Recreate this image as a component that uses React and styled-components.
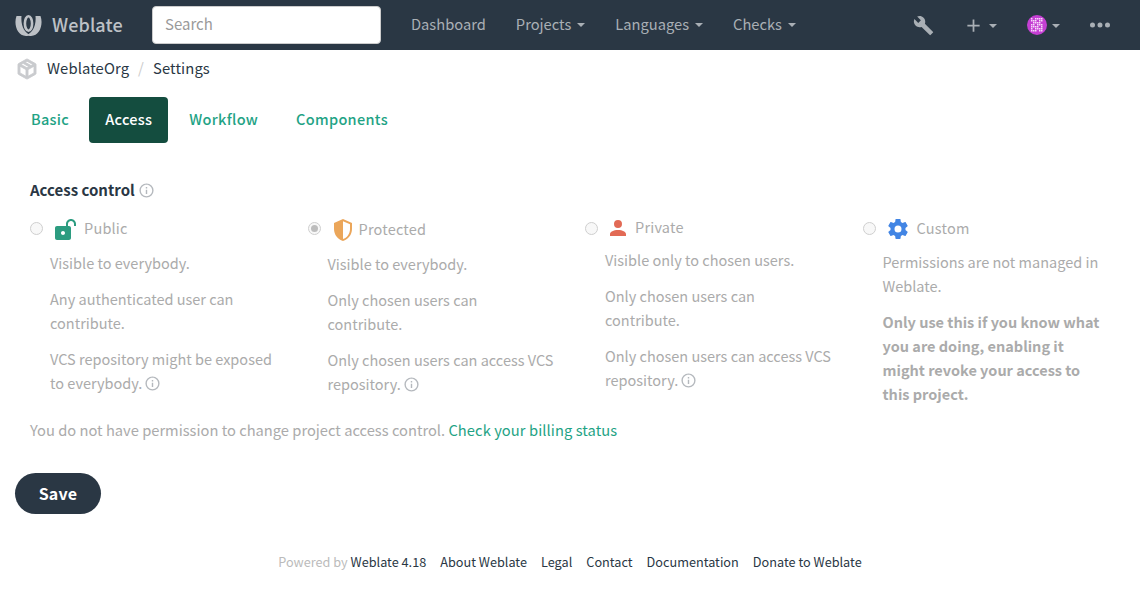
import React from 'react';
import styled, { createGlobalStyle } from 'styled-components';

const GlobalStyle = createGlobalStyle`
  * { box-sizing: border-box; }
  body {
    margin: 0;
    background: #fff;
    color: #2a3744;
    font-family: "Noto Sans CJK SC", "Open Sans", sans-serif;
    font-size: 14.5px;
    line-height: 20px;
  }
`;

const paths = {
  wrench: 'M22.7,19L13.6,9.9C14.5,7.6 14,4.9 12.1,3C10.1,1 7.1,0.6 4.7,1.7L9,6L6,9L1.6,4.7C0.4,7.1 0.9,10.1 2.9,12.1C4.8,14 7.5,14.5 9.8,13.6L18.9,22.7C19.3,23.1 19.9,23.1 20.3,22.7L22.6,20.4C23.1,20 23.1,19.3 22.7,19Z',
  plus: 'M19,13H13V19H11V13H5V11H11V5H13V11H19V13Z',
  dots: 'M16,12A2,2 0 0,1 18,10A2,2 0 0,1 20,12A2,2 0 0,1 18,14A2,2 0 0,1 16,12M10,12A2,2 0 0,1 12,10A2,2 0 0,1 14,12A2,2 0 0,1 12,14A2,2 0 0,1 10,12M4,12A2,2 0 0,1 6,10A2,2 0 0,1 8,12A2,2 0 0,1 6,14A2,2 0 0,1 4,12Z',
  lockOpen: 'M18 1C15.24 1 13 3.24 13 6V8H4C2.9 8 2 8.89 2 10V20C2 21.11 2.9 22 4 22H16C17.11 22 18 21.11 18 20V10C18 8.9 17.11 8 16 8H15V6C15 4.34 16.34 3 18 3C19.66 3 21 4.34 21 6V8H23V6C23 3.24 20.76 1 18 1M10 13C11.1 13 12 13.9 12 15C12 16.1 11.11 17 10 17C8.9 17 8 16.11 8 15C8 13.9 8.9 13 10 13Z',
  shield: 'M21,11C21,16.55 17.16,21.74 12,23C6.84,21.74 3,16.55 3,11V5L12,1L21,5V11M12,21C15.75,20 19,15.54 19,11.22V6.3L12,3.18V21Z',
  account: 'M12,4A4,4 0 0,1 16,8A4,4 0 0,1 12,12A4,4 0 0,1 8,8A4,4 0 0,1 12,4M12,14C16.42,14 20,15.79 20,18V20H4V18C4,15.79 7.58,14 12,14Z',
  cog: 'M12,15.5A3.5,3.5 0 0,1 8.5,12A3.5,3.5 0 0,1 12,8.5A3.5,3.5 0 0,1 15.5,12A3.5,3.5 0 0,1 12,15.5M19.43,12.97C19.47,12.65 19.5,12.33 19.5,12C19.5,11.67 19.47,11.34 19.43,11L21.54,9.37C21.73,9.22 21.78,8.95 21.66,8.73L19.66,5.27C19.54,5.05 19.27,4.96 19.05,5.05L16.56,6.05C16.04,5.66 15.5,5.32 14.87,5.07L14.5,2.42C14.46,2.18 14.25,2 14,2H10C9.75,2 9.54,2.18 9.5,2.42L9.13,5.07C8.5,5.32 7.96,5.66 7.44,6.05L4.95,5.05C4.73,4.96 4.46,5.05 4.34,5.27L2.34,8.73C2.21,8.95 2.27,9.22 2.46,9.37L4.57,11C4.53,11.34 4.5,11.67 4.5,12C4.5,12.33 4.53,12.65 4.57,12.97L2.46,14.63C2.27,14.78 2.21,15.05 2.34,15.27L4.34,18.73C4.46,18.95 4.73,19.03 4.95,18.95L7.44,17.94C7.96,18.34 8.5,18.68 9.13,18.93L9.5,21.58C9.54,21.82 9.75,22 10,22H14C14.25,22 14.46,21.82 14.5,21.58L14.87,18.93C15.5,18.67 16.04,18.34 16.56,17.94L19.05,18.95C19.27,19.03 19.54,18.95 19.66,18.73L21.66,15.27C21.78,15.05 21.73,14.78 21.54,14.63L19.43,12.97Z',
  info: 'M11,9H13V7H11M12,20C7.59,20 4,16.41 4,12C4,7.59 7.59,4 12,4C16.41,4 20,7.59 20,12C20,16.41 16.41,20 12,20M12,2A10,10 0 0,0 2,12A10,10 0 0,0 12,22A10,10 0 0,0 22,12A10,10 0 0,0 12,2M11,17H13V11H11V17Z',
  box: 'M21,16.5C21,16.88 20.79,17.21 20.47,17.38L12.57,21.82C12.41,21.94 12.21,22 12,22C11.79,22 11.59,21.94 11.43,21.82L3.53,17.38C3.21,17.21 3,16.88 3,16.5V7.5C3,7.12 3.21,6.79 3.53,6.62L11.43,2.18C11.59,2.06 11.79,2 12,2C12.21,2 12.41,2.06 12.57,2.18L20.47,6.62C20.79,6.79 21,7.12 21,7.5V16.5M12,4.15L10.11,5.22L16,8.61L17.96,7.5L12,4.15M6.04,7.5L12,10.85L13.96,9.75L8.08,6.35L6.04,7.5M5,15.91L11,19.29V12.58L5,9.21V15.91M19,15.91V9.21L13,12.58V19.29L19,15.91Z',
};

const Svg = styled.svg`
  display: block;
  flex: none;
  fill: ${(p) => p.$color};
  stroke: ${(p) => (p.$bold ? p.$color : 'none')};
  stroke-width: ${(p) => p.$bold || 0}px;
`;

const Icon = ({ name, size = 24, color = '#a0a7ad', bold }) => (
  <Svg viewBox="0 0 24 24" width={size} height={size} $color={color} $bold={bold}>
    <path d={paths[name]} />
  </Svg>
);

const Navbar = styled.nav`
  display: flex;
  align-items: center;
  height: 50px;
  background: #2a3744;
  padding: 0 15px;
`;

const Brand = styled.div`
  display: flex;
  align-items: center;
  gap: 10px;
  width: 137px;
  padding-bottom: 2px;
  color: #bdc1c6;
  font-size: 18px;
  font-weight: 500;
  letter-spacing: 0.1px;
`;

const Logo = styled.svg`
  display: block;
  flex: none;
  margin-top: 3px;
  fill: #bdc1c6;
`;

const Search = styled.input`
  width: 229px;
  height: 38px;
  padding: 0 12px 3px;
  border: 1px solid #ccc;
  border-radius: 4px;
  background: #fff;
  font: inherit;
  font-size: 15px;
  &::placeholder { color: #9a9a9a; opacity: 1; }
`;

const NavLinks = styled.div`
  display: flex;
  align-items: center;
  gap: 30px;
  margin-left: 30px;
  padding-bottom: 2px;
`;

const NavLink = styled.a`
  display: flex;
  align-items: center;
  gap: 6px;
  color: #a9afb5;
  font-size: 14.7px;
`;

const Caret = styled.span`
  flex: none;
  width: 0;
  height: 0;
  margin-top: 2px;
  border-top: 4px solid #a9afb5;
  border-left: 4px solid transparent;
  border-right: 4px solid transparent;
`;

const NavTools = styled.div`
  display: flex;
  align-items: center;
  margin-left: auto;
  padding-right: 10px;
`;

const Tool = styled.div`
  display: flex;
  align-items: center;
  gap: 5px;
  margin-left: ${(p) => p.$gap || 0}px;
`;

const Avatar = styled.svg`
  display: block;
  border-radius: 50%;
`;

const Breadcrumb = styled.div`
  display: flex;
  align-items: center;
  height: 37px;
  padding-left: 15px;
  font-size: 14.8px;
  letter-spacing: 0.1px;
`;

const Sep = styled.span`
  color: #ccc;
  margin: 0 9px;
`;

const Crumbs = styled.div`
  display: flex;
  align-items: center;
  margin-left: 8px;
  padding-bottom: 2px;
`;

const Tabs = styled.div`
  display: flex;
  gap: 2px;
  padding: 10px 15px 0;
`;

const Tab = styled.a`
  height: 46px;
  padding: 0 ${(p) => p.$pad}px 2px ${(p) => p.$left || p.$pad}px;
  display: flex;
  align-items: center;
  border-radius: 4px;
  font-size: 14.5px;
  font-weight: 500;
  letter-spacing: 0.3px;
  color: ${(p) => (p.$active ? '#fff' : '#1fa385')};
  background: ${(p) => (p.$active ? '#144d3f' : 'transparent')};
`;

const Form = styled.form`
  padding: 37px 15px 0;
`;

const Group = styled.div`
  padding: 0 15px;
`;

const Label = styled.div`
  display: flex;
  align-items: center;
  font-size: 15px;
  font-weight: 700;
  line-height: 20px;
`;

const Columns = styled.div`
  display: grid;
  grid-template-columns: repeat(4, 277.5px);
  margin-top: 15px;
  color: #ababab;
  font-size: 14.5px;
`;

const Head = styled.div`
  display: flex;
  align-items: flex-start;
  height: ${(p) => p.$h}px;
  line-height: 24px;
`;

const Radio = styled.span`
  position: relative;
  flex: none;
  width: 13px;
  height: 13px;
  margin: 7px 10px 0 0;
  border: 1px solid #cfcfcf;
  border-radius: 50%;
  background: #f8f8f8;
  ${(p) =>
    p.$checked &&
    `&::after {
      content: '';
      position: absolute;
      inset: 2px;
      border-radius: 50%;
      background: #bdbdbd;
    }`}
`;

const HeadIcon = styled.span`
  margin: ${(p) => p.$top}px ${(p) => p.$right}px 0 ${(p) => p.$left || 0}px;
`;

const Title = styled.span`
  margin-top: ${(p) => p.$top}px;
  letter-spacing: 0.2px;
`;

const Para = styled.p`
  width: 226px;
  margin: 12px 0 0 20px;
  line-height: 24px;
  font-weight: ${(p) => (p.$bold ? 700 : 400)};
`;

const InlineIcon = styled.span`
  display: inline-block;
  vertical-align: -3px;
  margin-left: ${(p) => p.$left}px;
`;

const Notice = styled.p`
  margin: 12px 0 0;
  font-size: 14.7px;
  line-height: 24px;
  color: #ababab;
`;

const Link = styled.a`
  color: #1fa385;
  letter-spacing: 0.08px;
`;

const Save = styled.button`
  display: block;
  width: 86px;
  height: 41px;
  margin-top: 31px;
  padding: 0 0 2px;
  border: 0;
  border-radius: 21px;
  background: #2a3744;
  color: #fff;
  font: inherit;
  font-size: 16px;
  font-weight: 700;
  letter-spacing: 0.2px;
`;

const Footer = styled.footer`
  display: flex;
  justify-content: center;
  gap: 14px;
  margin-top: 38px;
  font-size: 12.7px;
  color: #2a3744;
`;

const Powered = styled.span`
  color: #bbb;
`;

const Info = ({ left = 2, size = 17 }) => (
  <InlineIcon $left={left}>
    <Icon name="info" size={size} color="#b4b8bd" />
  </InlineIcon>
);

// identicon cells of the user's avatar
const cells = [];
for (let y = 3; y < 17; y += 2) {
  for (let x = 4; x < 16; x += 2) {
    if ((x + y * 3) % 5 !== 0) cells.push([x, y]);
  }
}

const App = () => (
  <>
    <GlobalStyle />
    <Navbar>
      <Brand>
        <Logo width="27" height="21" viewBox="0 0 27 21">
          <path d="M1.5 1C-1.5 9 2 21 11 21C12.5 21 14 20.5 15 19.5C10 18.5 5.5 11 6.5 1Z" />
          <path d="M25.5 1C28.5 9 25 21 16 21C14.5 21 13 20.5 12 19.5C17 18.5 21.5 11 20.5 1Z" />
          <ellipse cx="13.5" cy="8.5" rx="3.6" ry="7.2" fill="none" stroke="#bdc1c6" strokeWidth="2.6" />
        </Logo>
        Weblate
      </Brand>
      <Search placeholder="Search" />
      <NavLinks>
        <NavLink>Dashboard</NavLink>
        <NavLink>Projects <Caret /></NavLink>
        <NavLink>Languages <Caret /></NavLink>
        <NavLink>Checks <Caret /></NavLink>
      </NavLinks>
      <NavTools>
        <Tool><Icon name="wrench" size={21} color="#a9afb5" /></Tool>
        <Tool $gap={29}><Icon name="plus" size={21} color="#a9afb5" /><Caret /></Tool>
        <Tool $gap={30}>
          <Avatar width="20" height="20" viewBox="0 0 20 20">
            <rect width="20" height="20" fill="#c43fd3" />
            {cells.map(([x, y]) => (
              <rect key={`${x}-${y}`} x={x} y={y} width="1.5" height="1.5" fill="#f6d8f9" />
            ))}
          </Avatar>
          <Caret />
        </Tool>
        <Tool $gap={25}><Icon name="dots" size={30} color="#a9afb5" /></Tool>
      </NavTools>
    </Navbar>

    <Breadcrumb>
      <Icon name="box" size={24} color="#c9cbce" bold={0.9} />
      <Crumbs>
        WeblateOrg<Sep>/</Sep>Settings
      </Crumbs>
    </Breadcrumb>

    <Tabs>
      <Tab $left={16} $pad={18}>Basic</Tab>
      <Tab $pad={16} $active>Access</Tab>
      <Tab $left={19} $pad={20}>Workflow</Tab>
      <Tab $pad={16}>Components</Tab>
    </Tabs>

    <Form>
      <Group>
        <Label>Access control <Info left={3} /></Label>
        <Columns>
          <div>
            <Head $h={24}>
              <Radio />
              <HeadIcon $top={3} $right={7}><Icon name="lockOpen" color="#2c9c80" /></HeadIcon>
              <Title $top={1}>Public</Title>
            </Head>
            <Para>Visible to everybody.</Para>
            <Para>Any authenticated user can contribute.</Para>
            <Para>VCS repository might be exposed to everybody.<Info /></Para>
          </div>
          <div>
            <Head $h={25}>
              <Radio $checked />
              <HeadIcon $top={3} $right={4}><Icon name="shield" color="#eba65a" /></HeadIcon>
              <Title $top={2}>Protected</Title>
            </Head>
            <Para>Visible to everybody.</Para>
            <Para>Only chosen users can contribute.</Para>
            <Para>Only chosen users can access VCS repository.<Info /></Para>
          </div>
          <div>
            <Head $h={21}>
              <Radio />
              <HeadIcon $top={1} $right={5} $left={-2}><Icon name="account" color="#e26a55" /></HeadIcon>
              <Title $top={0}>Private</Title>
            </Head>
            <Para>Visible only to chosen users.</Para>
            <Para>Only chosen users can contribute.</Para>
            <Para>Only chosen users can access VCS repository.<Info /></Para>
          </div>
          <div>
            <Head $h={23}>
              <Radio />
              <HeadIcon $top={2} $right={7}><Icon name="cog" color="#4285e4" /></HeadIcon>
              <Title $top={1}>Custom</Title>
            </Head>
            <Para>Permissions are not managed in Weblate.</Para>
            <Para $bold>Only use this if you know what you are doing, enabling it might revoke your access to this project.</Para>
          </div>
        </Columns>
        <Notice>
          You do not have permission to change project access control. <Link>Check your billing status</Link>
        </Notice>
      </Group>
      <Save type="button">Save</Save>
    </Form>

    <Footer>
      <span><Powered>Powered by</Powered> Weblate 4.18</span>
      <span>About Weblate</span>
      <span>Legal</span>
      <span>Contact</span>
      <span>Documentation</span>
      <span>Donate to Weblate</span>
    </Footer>
  </>
);

export default App;
